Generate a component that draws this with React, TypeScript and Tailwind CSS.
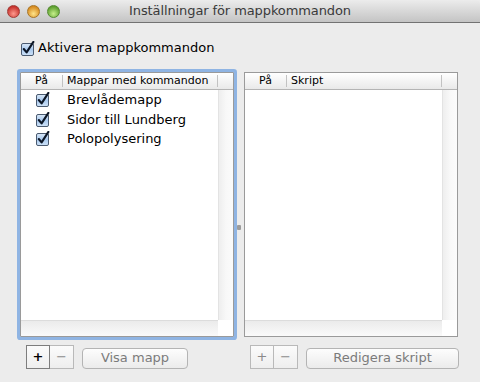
import React from "react";

const Check = () => (
  <svg width={15} height={15} viewBox="0 0 15 15">
    <defs>
      <linearGradient id="cbg" x1="0" y1="0" x2="0" y2="1">
        <stop offset="0" stopColor="#dbe9f8" />
        <stop offset="0.5" stopColor="#a9c9ee" />
        <stop offset="1" stopColor="#cfe3f8" />
      </linearGradient>
    </defs>
    <rect x="1.5" y="2.5" width="12" height="12" rx="1.5" fill="url(#cbg)" stroke="#4a5a70" strokeWidth="1" />
    <path d="M3.8 8 L6.6 11.4 L13.4 0.9" fill="none" stroke="#0c1626" strokeWidth="2.1" strokeLinecap="round" strokeLinejoin="round" />
  </svg>
);

const Light = ({ from, to, border }: { from: string; to: string; border: string }) => (
  <div
    className="w-[13px] h-[13px] rounded-full"
    style={{ background: `radial-gradient(circle at 50% 70%, ${to} 0%, ${from} 75%)`, border: `1px solid ${border}` }}
  />
);

const Table = ({
  focused,
  col2,
  rows,
}: {
  focused?: boolean;
  col2: string;
  rows: string[];
}) => (
  <div
    className={
      "flex flex-col w-[214px] h-[265px] border border-[#9a9a9a] bg-white " +
      (focused ? "shadow-[0_0_0_3px_#8fb4e3] rounded-[1px]" : "")
    }
  >
    <div className="flex h-[17px] border-b border-[#b4b4b4] bg-gradient-to-b from-[#ffffff] to-[#e9e9e9] text-[11px] text-black leading-[16px]">
      <div className="w-[42px] flex items-center justify-center border-r border-[#c2c2c2] my-[2px]">På</div>
      <div className="flex-1 pl-[4px] border-r border-[#c2c2c2] my-[2px] flex items-center">{col2}</div>
      <div className="w-[15px]" />
    </div>
    <div className="flex-1 flex flex-col">
      <div className="flex-1 flex">
        <div className="flex-1 flex flex-col">
          {rows.map((r) => (
            <div key={r} className="h-[19.5px] flex items-center">
              <div className="w-[43px] flex justify-center">
                <Check />
              </div>
              <div className="pl-[3px] text-[13px] text-black">{r}</div>
            </div>
          ))}
        </div>
        <div className="w-[15px] bg-gradient-to-r from-[#eeeeee] via-[#f8f8f8] to-[#fbfbfb] border-l border-[#e3e3e3]" />
      </div>
      <div className="h-[16px] flex">
        <div className="flex-1 bg-gradient-to-b from-[#ebebeb] to-[#fafafa] border-t border-[#dcdcdc]" />
        <div className="w-[15px] bg-white" />
      </div>
    </div>
  </div>
);

const Segmented = ({ active }: { active?: boolean }) => (
  <div className="flex h-[24px] text-[13px]">
    <div
      className={
        "w-[24px] flex items-center justify-center border bg-gradient-to-b from-[#fbfbfb] to-[#eeeeee] " +
        (active ? "border-[#7d7d7d] text-black font-bold" : "border-[#b9b9b9] text-[#8a8a8a]")
      }
    >
      +
    </div>
    <div className="w-[24px] flex items-center justify-center border border-l-0 border-[#b9b9b9] bg-gradient-to-b from-[#fbfbfb] to-[#eeeeee] text-[#8a8a8a]">
      −
    </div>
  </div>
);

const Button = ({ w, label }: { w: string; label: string }) => (
  <div
    className={
      w +
      " h-[21px] mt-[2px] rounded-[4px] border border-[#b4b4b4] bg-gradient-to-b from-[#fdfdfd] to-[#ebebeb] flex items-center justify-center text-[13px] text-[#7b7b7b]"
    }
  >
    {label}
  </div>
);

export default function App() {
  return (
    <div
      className="w-[480px] h-[382px] bg-[#ececec] overflow-hidden flex flex-col"
      style={{ fontFamily: '"DejaVu Sans", "Lucida Grande", sans-serif' }}
    >
      <div className="h-[23px] shrink-0 grid grid-cols-[1fr_auto_1fr] items-center bg-gradient-to-b from-[#ececec] to-[#c4c4c4] border-b border-[#727272] rounded-t-[4px]">
        <div className="flex gap-[7px] pl-[7px]">
          <Light from="#c5302b" to="#ff9a8e" border="#a23b36" />
          <Light from="#d6891e" to="#ffe58a" border="#a97525" />
          <Light from="#5c9e2e" to="#c7f08a" border="#548a31" />
        </div>
        <div className="text-[13px] text-[#3a3a3a] tracking-[-0.1px]">Inställningar för mappkommandon</div>
        <div />
      </div>
      <div className="flex flex-col px-[20px] pt-[17px]">
        <div className="flex items-center gap-[3px] h-[16px]">
          <Check />
          <span className="text-[13px] text-black">Aktivera mappkommandon</span>
        </div>
        <div className="flex mt-[16px] items-start">
          <div className="flex flex-col">
            <Table focused col2="Mappar med kommandon" rows={["Brevlådemapp", "Sidor till Lundberg", "Polopolysering"]} />
            <div className="flex items-center gap-[8px] mt-[8px] ml-[6px]">
              <Segmented active />
              <Button w="w-[106px]" label="Visa mapp" />
            </div>
          </div>
          <div className="w-[10px] flex justify-center pt-[153px]">
            <div className="w-[4px] h-[5px] rounded-[1px] bg-[#9c9c9c]" />
          </div>
          <div className="flex flex-col">
            <Table col2="Skript" rows={[]} />
            <div className="flex items-center gap-[8px] mt-[8px] ml-[6px]">
              <Segmented />
              <Button w="w-[153px]" label="Redigera skript" />
            </div>
          </div>
        </div>
      </div>
    </div>
  );
}
